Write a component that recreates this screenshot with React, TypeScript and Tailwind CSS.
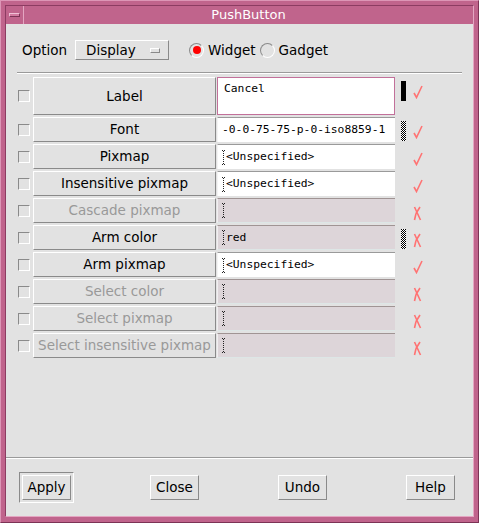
import type { ReactNode } from "react";

type Row = {
  label: string;
  value: string;
  tall?: boolean;
  focus?: boolean;
  cursor?: boolean;
  labelOff?: boolean;
  fieldOff?: boolean;
  mark?: "bar" | "dots";
  ok: boolean;
};

const ROWS: Row[] = [
  { label: "Label", value: "Cancel", tall: true, focus: true, mark: "bar", ok: true },
  { label: "Font", value: "-0-0-75-75-p-0-iso8859-1", mark: "dots", ok: true },
  { label: "Pixmap", value: "<Unspecified>", cursor: true, ok: true },
  { label: "Insensitive pixmap", value: "<Unspecified>", cursor: true, ok: true },
  { label: "Cascade pixmap", value: "", cursor: true, labelOff: true, fieldOff: true, ok: false },
  { label: "Arm color", value: "red", cursor: true, fieldOff: true, mark: "dots", ok: false },
  { label: "Arm pixmap", value: "<Unspecified>", cursor: true, ok: true },
  { label: "Select color", value: "", cursor: true, labelOff: true, fieldOff: true, ok: false },
  { label: "Select pixmap", value: "", cursor: true, labelOff: true, fieldOff: true, ok: false },
  { label: "Select insensitive pixmap", value: "", cursor: true, labelOff: true, fieldOff: true, ok: false },
];

const sans = "font-['DejaVu_Sans',sans-serif]";
const mono = "font-['DejaVu_Sans_Mono',monospace]";
const raised = "border border-t-white border-l-white border-r-[#8a8a8a] border-b-[#8a8a8a] bg-[#e2e2e2]";

function CheckMark() {
  return (
    <svg width="10" height="14" viewBox="0 0 10 14" className="block">
      <path d="M1 8 L3.5 12.5 L9 1" fill="none" stroke="#ff7373" strokeWidth="1.6" />
    </svg>
  );
}

function CrossMark() {
  return (
    <svg width="9" height="15" viewBox="0 0 9 15" className="block">
      <path d="M1.5 1 L7.5 14 M7 1 L3 7.5 M1.5 14 L3 7.5" fill="none" stroke="#ff7373" strokeWidth="1.6" />
    </svg>
  );
}

function IBeam() {
  return (
    <svg width="3" height="15" viewBox="0 0 3 15" className="shrink-0" shapeRendering="crispEdges" fill="#222">
      <rect x="0" y="0" width="1" height="1" />
      <rect x="2" y="0" width="1" height="1" />
      <rect x="1" y="1" width="1" height="1" />
      <rect x="1" y="3" width="1" height="1" />
      <rect x="1" y="5" width="1" height="1" />
      <rect x="1" y="7" width="1" height="1" />
      <rect x="1" y="9" width="1" height="1" />
      <rect x="1" y="11" width="1" height="1" />
      <rect x="1" y="13" width="1" height="1" />
      <rect x="0" y="14" width="1" height="1" />
      <rect x="2" y="14" width="1" height="1" />
    </svg>
  );
}

function Dither() {
  return (
    <svg width="5" height="20" viewBox="0 0 5 20" shapeRendering="crispEdges" className="block">
      <defs>
        <pattern id="dith" width="2" height="2" patternUnits="userSpaceOnUse">
          <rect width="2" height="2" fill="#fff" />
          <rect width="1" height="1" fill="#000" />
          <rect x="1" y="1" width="1" height="1" fill="#000" />
        </pattern>
      </defs>
      <rect width="5" height="20" fill="url(#dith)" />
    </svg>
  );
}

function Field({ row }: { row: Row }) {
  let box = "border-t border-t-[#9a9a9a] border-l border-l-[#f4f4f4] bg-white";
  if (row.focus) box = "border border-[#c2709a] bg-white";
  else if (row.fieldOff) box = "border-t border-t-[#a09494] border-l border-l-[#f0eef0] border-b border-b-[#dde6e6] bg-[#ddd5d9]";
  return (
    <div
      className={`ml-px flex w-[178px] ${row.tall ? "h-[38px] items-start pt-[5px] pl-[6px]" : "h-[25px] items-center pl-[4px]"} ${box} ${mono} text-[11.3px] leading-none text-black`}
    >
      {row.cursor && <IBeam />}
      <span className={row.cursor ? "ml-px" : ""}>{row.value}</span>
    </div>
  );
}

function TableRow({ row }: { row: Row }) {
  return (
    <div className="flex items-start">
      <div className={`flex w-[24px] items-center pl-[12px] ${row.tall ? "h-[38px]" : "h-[25px]"}`}>
        <div className="h-[12px] w-[12px] border border-t-[#8a8a8a] border-l-[#8a8a8a] border-r-white border-b-white bg-[#e2e2e2]" />
      </div>
      <div
        className={`ml-[3px] flex w-[183px] items-center justify-center ${row.tall ? "h-[38px]" : "h-[25px]"} ${raised} ${sans} text-[13.5px] ${row.labelOff ? "text-[#999999]" : "text-black"}`}
      >
        {row.label}
      </div>
      <Field row={row} />
      <div className="ml-[6px] mt-[4px] h-[20px] w-[5px]">
        {row.mark === "bar" && <div className="h-[20px] w-[5px] bg-black" />}
        {row.mark === "dots" && <Dither />}
      </div>
      <div className="ml-[7px] mt-[8px]">{row.ok ? <CheckMark /> : <CrossMark />}</div>
    </div>
  );
}

function Radio({ on, children }: { on?: boolean; children: ReactNode }) {
  return (
    <div className="flex items-center">
      <div className="flex h-[15px] w-[15px] items-center justify-center rounded-full border border-t-[#8a8a8a] border-l-[#8a8a8a] border-r-white border-b-white">
        {on && <div className="h-[8px] w-[8px] rounded-full bg-[#ff0000]" />}
      </div>
      <span className="ml-[4px]">{children}</span>
    </div>
  );
}

function PushButton({ label, isDefault }: { label: string; isDefault?: boolean }) {
  return (
    <div
      className={`flex h-[31px] w-[55px] items-center justify-center ${isDefault ? "border border-t-[#8a8a8a] border-l-[#8a8a8a] border-r-white border-b-white" : ""}`}
    >
      <div className={`flex h-[25px] w-[49px] items-center justify-center ${raised}`}>{label}</div>
    </div>
  );
}

export default function App() {
  return (
    <div className="h-[523px] w-[479px] border border-t-[#dc96b6] border-l-[#dc96b6] border-r-[#7c3355] border-b-[#7c3355] bg-[#c0648c] pt-[4px] pr-[4px] pb-[5px] pl-[4px]">
      <div className="flex h-full flex-col border border-t-[#8c3c62] border-l-[#8c3c62] border-r-[#e4a6c2] border-b-[#e4a6c2]">
        <div className="flex h-[18px] shrink-0 items-center">
          <div className="flex h-[18px] w-[18px] items-center justify-center border-r border-r-[#e4a6c2]">
            <div className="h-[4px] w-[11px] border border-t-[#f0c0d6] border-l-[#f0c0d6] border-r-[#7c3355] border-b-[#7c3355] bg-[#d27aa0]" />
          </div>
          <div className={`flex-1 text-center ${sans} text-[13px] text-white`}>PushButton</div>
        </div>
        <div className={`flex flex-1 flex-col bg-[#e2e2e2] ${sans} text-[13.5px] text-black`}>
          <div className="mt-[16px] flex h-[20px] items-center pl-[16px]">
            <span>Option</span>
            <div className={`ml-[8px] flex h-[20px] w-[94px] items-center pl-[10px] ${raised}`}>
              <span>Display</span>
              <div className="ml-[14px] h-[5px] w-[10px] border border-t-white border-l-white border-r-[#8a8a8a] border-b-[#8a8a8a]" />
            </div>
            <div className="ml-[20px]">
              <Radio on>Widget</Radio>
            </div>
            <div className="ml-[4px]">
              <Radio>Gadget</Radio>
            </div>
          </div>
          <div className="ml-[11px] mt-[12px] h-[2px] w-[445px] border-t border-t-[#9a9a9a] border-b border-b-white" />
          <div className="mt-[3px] flex flex-col gap-[2px]">
            {ROWS.map((row) => (
              <TableRow key={row.label} row={row} />
            ))}
          </div>
          <div className="flex-1" />
          <div className="h-[2px] w-full border-t border-t-[#9a9a9a] border-b border-b-white" />
          <div className="mt-[13px] mb-[13px] flex gap-[73px] pl-[13px]">
            <PushButton label="Apply" isDefault />
            <PushButton label="Close" />
            <PushButton label="Undo" />
            <PushButton label="Help" />
          </div>
        </div>
      </div>
    </div>
  );
}
